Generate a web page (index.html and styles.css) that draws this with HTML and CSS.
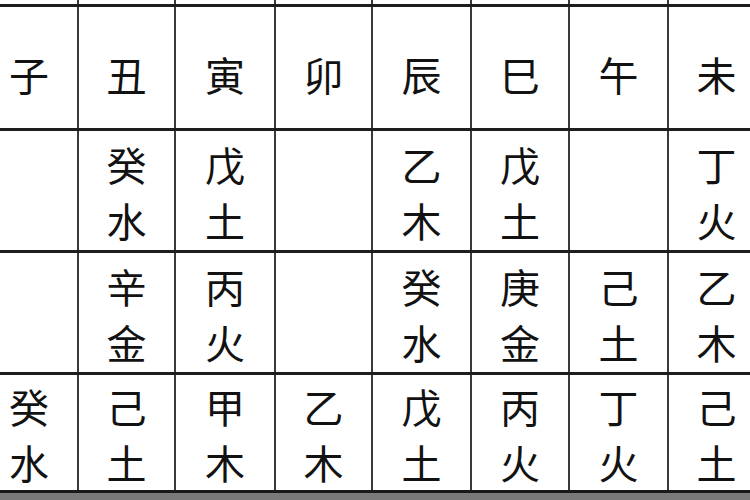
FILE: index.html
```html
<!DOCTYPE html>
<html lang="zh">
<head>
<meta charset="utf-8">
<link rel="stylesheet" href="styles.css">
</head>
<body>
<div class="page">
  <table class="zhi">
    <colgroup>
      <col class="c0"><col class="c1"><col class="c2"><col class="c3"><col class="c4"><col class="c5"><col class="c6"><col class="c7">
    </colgroup>
    <tr class="prev"><td></td><td></td><td></td><td></td><td></td><td></td><td></td><td></td></tr>
    <tr class="head">
      <td>子</td><td>丑</td><td>寅</td><td>卯</td><td>辰</td><td>巳</td><td>午</td><td>未</td>
    </tr>
    <tr class="body">
      <td></td>
      <td><span>癸</span><span>水</span></td>
      <td><span>戊</span><span>土</span></td>
      <td></td>
      <td><span>乙</span><span>木</span></td>
      <td><span>戊</span><span>土</span></td>
      <td></td>
      <td><span>丁</span><span>火</span></td>
    </tr>
    <tr class="body">
      <td></td>
      <td><span>辛</span><span>金</span></td>
      <td><span>丙</span><span>火</span></td>
      <td></td>
      <td><span>癸</span><span>水</span></td>
      <td><span>庚</span><span>金</span></td>
      <td><span>己</span><span>土</span></td>
      <td><span>乙</span><span>木</span></td>
    </tr>
    <tr class="body last">
      <td><span>癸</span><span>水</span></td>
      <td><span>己</span><span>土</span></td>
      <td><span>甲</span><span>木</span></td>
      <td><span>乙</span><span>木</span></td>
      <td><span>戊</span><span>土</span></td>
      <td><span>丙</span><span>火</span></td>
      <td><span>丁</span><span>火</span></td>
      <td><span>己</span><span>土</span></td>
    </tr>
  </table>
  <div class="foot"></div>
</div>
</body>
</html>
```

FILE: styles.css
```css
html, body {
  margin: 0;
  padding: 0;
  background: #ffffff;
}
.page {
  width: 750px;
  height: 500px;
  overflow: hidden;
}
.zhi {
  border-collapse: collapse;
  table-layout: fixed;
  width: 785px;
  margin-left: -21px;
  margin-top: -23px;
  font-family: "Noto Sans CJK SC", "Noto Sans CJK JP", sans-serif;
  color: #121212;
}
.c0 { width: 98px; }
.c1 { width: 97px; }
.c2 { width: 100px; }
.c3 { width: 97px; }
.c4 { width: 99px; }
.c5 { width: 98px; }
.c6 { width: 99px; }
.c7 { width: 97px; }
.zhi td {
  border-left: 2px solid #3a3a3a;
  border-right: 2px solid #3a3a3a;
  border-top: 3px solid #1e1e1e;
  border-bottom: 3px solid #1e1e1e;
  padding: 0;
  text-align: center;
  vertical-align: middle;
}
.prev td {
  height: 27px;
  border-top: 0;
}
.head td {
  height: 124px;
  font-size: 40px;
  line-height: 40px;
  padding-top: 12px;
  box-sizing: border-box;
}
.body td {
  height: 122px;
  font-size: 40px;
  line-height: 56px;
  box-sizing: border-box;
  padding-top: 2px;
}
.body td span {
  display: block;
}
.last td {
  height: 118px;
  border-bottom: 3px solid #1a1a1a;
}
.foot {
  height: 12px;
  background: #7a7a7a;
}
```
